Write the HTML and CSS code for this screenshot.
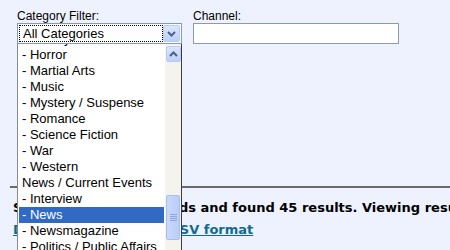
FILE: index.html
```html
<!DOCTYPE html>
<html lang="en">
<head>
<meta charset="UTF-8">
<title>Program Search</title>
<link rel="stylesheet" href="styles.css">
</head>
<body>
<form class="filters">
<div class="field">
<label>Category Filter:</label>
<div class="select">
<span class="value">All Categories</span>
<span class="drop-btn">
<svg width="9" height="6" viewBox="0 0 9 6"><path d="M1 1 L4.5 4.5 L8 1" fill="none" stroke="#4d6185" stroke-width="2"/></svg>
</span>
<div class="dropdown">
<ul class="options">
<li class="first">- History</li>
<li>- Horror</li>
<li>- Martial Arts</li>
<li>- Music</li>
<li>- Mystery / Suspense</li>
<li>- Romance</li>
<li>- Science Fiction</li>
<li>- War</li>
<li>- Western</li>
<li>News / Current Events</li>
<li>- Interview</li>
<li class="selected">- News</li>
<li>- Newsmagazine</li>
<li>- Politics / Public Affairs</li>
</ul>
<div class="scrollbar">
<span class="scroll-btn">
<svg width="9" height="6" viewBox="0 0 9 6"><path d="M1 5 L4.5 1.5 L8 5" fill="none" stroke="#4d6185" stroke-width="2"/></svg>
</span>
<span class="thumb"><i></i><i></i><i></i><i></i></span>
</div>
</div>
</div>
</div>
<div class="field">
<label>Channel:</label>
<input class="text-input" type="text">
</div>
</form>

<div class="results">
<p class="summary">Searched 12,000 records and found 45 results. Viewing results 1 - 45</p>
<a class="download" href="#">Download all rows in CSV format</a>
</div>
</body>
</html>
```

FILE: styles.css
```css
* {
margin: 0;
padding: 0;
box-sizing: border-box;
}

body {
background-color: #eef2fe;
font-family: "Liberation Sans", Arial, sans-serif;
color: #000;
width: 450px;
height: 250px;
overflow: hidden;
}

.filters {
display: flex;
gap: 11px;
padding: 9px 0 0 17px;
height: 186px;
}

.field label {
display: block;
font-size: 12px;
line-height: 14px;
}

.select {
position: relative;
width: 165px;
height: 21px;
border: 1px solid #7f9db9;
background: #fff;
display: flex;
padding: 1px;
}

.select .value {
flex: 1;
border: 1px dotted #000;
font-size: 13px;
line-height: 15px;
padding-left: 3px;
}

.drop-btn,
.scroll-btn {
width: 17px;
display: flex;
align-items: center;
justify-content: center;
background: linear-gradient(#dbe6fe, #bccff9);
border: 1px solid #b7cbf6;
border-radius: 2px;
}

.dropdown {
position: absolute;
top: 20px;
left: -1px;
width: 165px;
height: 220px;
background: #fff;
border: 1px solid #3c3c3c;
border-top: none;
border-left-color: #8a8a8a;
display: flex;
overflow: hidden;
}

.options {
flex: 1;
list-style: none;
font-size: 13px;
line-height: 16px;
}

.options li {
height: 16px;
padding-left: 3px;
margin: 0 1px;
white-space: nowrap;
overflow: hidden;
}

.options .first {
margin-top: -13px;
}

.options .selected {
background: #316ac5;
color: #fff;
}

.scrollbar {
width: 16px;
background: #f4f3ee;
display: flex;
flex-direction: column;
padding: 2px 0 0 1px;
}

.scroll-btn {
width: 15px;
height: 16px;
}

.thumb {
width: 14px;
height: 45px;
margin-top: 133px;
background: linear-gradient(90deg, #c9d8fc, #b9cdf9);
border: 1px solid #a9bff0;
border-radius: 2px;
display: flex;
flex-direction: column;
align-items: center;
justify-content: center;
gap: 1px;
}

.thumb i {
width: 7px;
height: 1px;
background: #8ea6dc;
}

.text-input {
display: block;
width: 206px;
height: 21px;
border: 1px solid #8f9aa6;
background: #fff;
}

.results {
border-top: 2px solid #6b6b6b;
margin-left: 10px;
padding: 9px 0 0 3px;
font-family: "DejaVu Sans", Verdana, sans-serif;
font-weight: bold;
font-size: 13px;
line-height: 22px;
}

.summary {
white-space: nowrap;
}

.download {
color: #0f6b8f;
}
```
